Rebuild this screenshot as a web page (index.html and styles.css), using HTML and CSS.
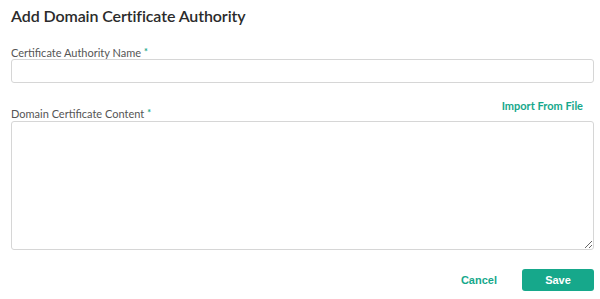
FILE: index.html
```html
<!DOCTYPE html>
<html>
<head>
<meta charset="utf-8">
<link rel="stylesheet" href="styles.css">
</head>
<body>
<div class="dialog">
  <h1 class="title">Add Domain Certificate Authority</h1>
  <div class="field">
    <label class="label">Certificate Authority Name<span class="req">*</span></label>
    <input class="input" type="text">
  </div>
  <div class="field field-content">
    <div class="label-row">
      <label class="label">Domain Certificate Content<span class="req">*</span></label>
      <a class="link">Import From File</a>
    </div>
    <textarea class="textarea"></textarea>
  </div>
  <div class="actions">
    <button class="btn btn-cancel">Cancel</button>
    <button class="btn btn-save">Save</button>
  </div>
</div>
</body>
</html>
```
FILE: styles.css
```css
* { box-sizing: border-box; }
html, body { margin: 0; padding: 0; background: #fff; }
body { font-family: "Lato", "Open Sans", sans-serif; color: #333; }
.dialog { padding: 6px 6px 0 11px; display: flex; flex-direction: column; }
.title { margin: 0; font-size: 16px; font-weight: 600; color: #2b2b2b; line-height: 20px; letter-spacing: -0.1px; }
.field { display: flex; flex-direction: column; margin-top: 19px; }
.label { font-size: 11px; color: #555; line-height: 13px; margin-bottom: 0; }
.req { color: #1aa68a; font-size: 9px; font-weight: 700; margin-left: 3px; vertical-align: 2px; }
.input { height: 24px; border: 1px solid #d6d6d6; border-radius: 3px; width: 583px; }
.field-content { margin-top: 16px; }
.label-row { display: flex; justify-content: space-between; align-items: flex-start; width: 583px; }
.label-row .label { margin-top: 7px; margin-bottom: 1px; }
.link { font-size: 11px; font-weight: 700; color: #16a88b; margin-right: 11px; line-height: 14px; }
.textarea { height: 129px; width: 583px; border: 1px solid #d6d6d6; border-radius: 3px; resize: vertical; }
.actions { display: flex; justify-content: flex-end; align-items: center; gap: 25px; margin-top: 19px; width: 583px; }
.btn { font-family: "Liberation Sans", Arial, sans-serif; font-weight: bold; font-size: 11px; border: none; cursor: pointer; }
.btn-cancel { background: none; color: #16a88b; padding: 0; }
.btn-save { background: #16a88b; color: #fff; width: 72px; height: 22px; border-radius: 3px; }
```
